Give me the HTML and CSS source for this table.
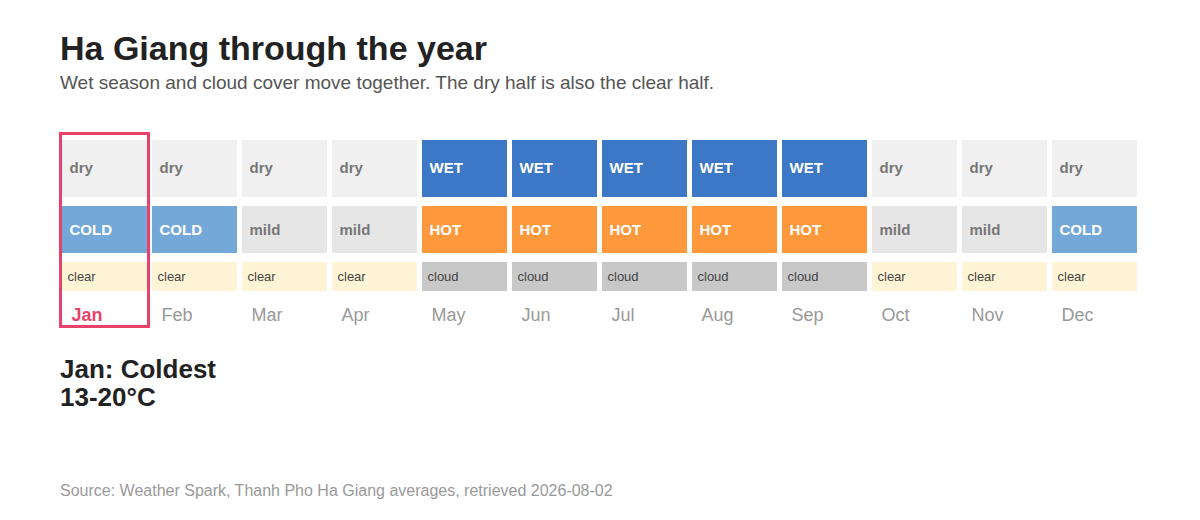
FILE: index.html
```html
<!DOCTYPE html>
<html lang="en">
<head>
<meta charset="utf-8">
<title>Ha Giang through the year</title>
<link rel="stylesheet" href="styles.css">
</head>
<body>
<div class="page">
  <h1 class="title">Ha Giang through the year</h1>
  <p class="subtitle">Wet season and cloud cover move together. The dry half is also the clear half.</p>

  <div class="months">
    <div class="month is-active">
      <div class="cell rain dry">dry</div>
      <div class="cell temp cold">COLD</div>
      <div class="cell sky clear">clear</div>
      <div class="label">Jan</div>
    </div>
    <div class="month">
      <div class="cell rain dry">dry</div>
      <div class="cell temp cold">COLD</div>
      <div class="cell sky clear">clear</div>
      <div class="label">Feb</div>
    </div>
    <div class="month">
      <div class="cell rain dry">dry</div>
      <div class="cell temp mild">mild</div>
      <div class="cell sky clear">clear</div>
      <div class="label">Mar</div>
    </div>
    <div class="month">
      <div class="cell rain dry">dry</div>
      <div class="cell temp mild">mild</div>
      <div class="cell sky clear">clear</div>
      <div class="label">Apr</div>
    </div>
    <div class="month">
      <div class="cell rain wet">WET</div>
      <div class="cell temp hot">HOT</div>
      <div class="cell sky cloud">cloud</div>
      <div class="label">May</div>
    </div>
    <div class="month">
      <div class="cell rain wet">WET</div>
      <div class="cell temp hot">HOT</div>
      <div class="cell sky cloud">cloud</div>
      <div class="label">Jun</div>
    </div>
    <div class="month">
      <div class="cell rain wet">WET</div>
      <div class="cell temp hot">HOT</div>
      <div class="cell sky cloud">cloud</div>
      <div class="label">Jul</div>
    </div>
    <div class="month">
      <div class="cell rain wet">WET</div>
      <div class="cell temp hot">HOT</div>
      <div class="cell sky cloud">cloud</div>
      <div class="label">Aug</div>
    </div>
    <div class="month">
      <div class="cell rain wet">WET</div>
      <div class="cell temp hot">HOT</div>
      <div class="cell sky cloud">cloud</div>
      <div class="label">Sep</div>
    </div>
    <div class="month">
      <div class="cell rain dry">dry</div>
      <div class="cell temp mild">mild</div>
      <div class="cell sky clear">clear</div>
      <div class="label">Oct</div>
    </div>
    <div class="month">
      <div class="cell rain dry">dry</div>
      <div class="cell temp mild">mild</div>
      <div class="cell sky clear">clear</div>
      <div class="label">Nov</div>
    </div>
    <div class="month">
      <div class="cell rain dry">dry</div>
      <div class="cell temp cold">COLD</div>
      <div class="cell sky clear">clear</div>
      <div class="label">Dec</div>
    </div>
  </div>

  <div class="detail">
    <div class="detail-line">Jan: Coldest</div>
    <div class="detail-line">13-20°C</div>
  </div>

  <p class="source">Source: Weather Spark, Thanh Pho Ha Giang averages, retrieved 2026-08-02</p>
</div>
</body>
</html>
```

FILE: styles.css
```css
html, body {
  margin: 0;
  padding: 0;
  background: #ffffff;
}

body {
  font-family: "Liberation Sans", Arial, sans-serif;
  color: #222222;
}

.page {
  padding: 28px 60px 0 60px;
}

.title {
  margin: 0;
  font-size: 34px;
  line-height: 40px;
  font-weight: 700;
  color: #222222;
}

.subtitle {
  margin: 3px 0 0 0;
  font-size: 19px;
  line-height: 24px;
  color: #555555;
}

.months {
  margin-top: 40px;
  padding: 0 3px 0 1.5px;
  display: grid;
  grid-template-columns: repeat(12, 1fr);
  column-gap: 4.5px;
}

.month {
  display: flex;
  flex-direction: column;
  gap: 9px;
  padding-top: 5px;
}

.month.is-active {
  outline: 3px solid #e8426a;
}

.cell {
  display: flex;
  align-items: center;
  box-sizing: border-box;
}

.rain {
  height: 57px;
  padding-left: 8px;
  padding-bottom: 2px;
  font-size: 15px;
  font-weight: 700;
}

.temp {
  height: 47px;
  padding-left: 8px;
  font-size: 15px;
  font-weight: 700;
}

.sky {
  height: 29px;
  padding-left: 6px;
  padding-bottom: 1px;
  font-size: 13px;
  color: #444444;
}

.dry {
  background: #f0f0f0;
  color: #777777;
}

.wet {
  background: #3c78c5;
  color: #ffffff;
}

.cold {
  background: #74a8d9;
  color: #ffffff;
}

.mild {
  background: #e6e6e6;
  color: #777777;
}

.hot {
  background: #fe983c;
  color: #ffffff;
}

.clear {
  background: #fff5d6;
}

.cloud {
  background: #c8c8c8;
}

.label {
  height: 25px;
  box-sizing: border-box;
  padding: 5px 0 0 10px;
  font-size: 18px;
  line-height: 20px;
  color: #999999;
}

.is-active .label {
  color: #e8426a;
  font-weight: 700;
}

.detail {
  margin-top: 30px;
  font-size: 26px;
  line-height: 28px;
  font-weight: 700;
  color: #222222;
}

.source {
  margin: 71px 0 0 0;
  font-size: 16px;
  line-height: 18px;
  color: #999999;
}
```
